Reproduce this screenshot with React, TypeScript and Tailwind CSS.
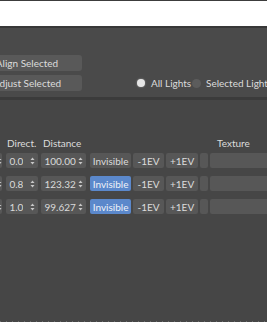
import React from 'react';

const rows = [
  { direct: '0.0', distance: '100.00', active: false },
  { direct: '0.8', distance: '123.32', active: true },
  { direct: '1.0', distance: '99.627', active: true },
];

function Arrows() {
  return (
    <svg width="5" height="8" viewBox="0 0 5 8" className="shrink-0">
      <path d="M2.5 0.5 L4.5 3 L0.5 3 Z" fill="#c8c8c8" />
      <path d="M2.5 7.5 L4.5 5 L0.5 5 Z" fill="#c8c8c8" />
    </svg>
  );
}

function Spinner({ value, width }: { value: string; width: string }) {
  return (
    <div className={`flex h-[15px] items-center justify-between overflow-hidden rounded-[2px] bg-[#575757] pl-[3px] pr-[3px] ${width}`}>
      <span className="overflow-hidden whitespace-nowrap text-[#dadada]">{value}</span>
      <Arrows />
    </div>
  );
}

export default function App() {
  return (
    <div
      className="flex h-[322px] w-[267px] flex-col overflow-hidden bg-[#464646] text-[10px] leading-[14px] text-[#dcdcdc]"
      style={{ fontFamily: 'Lato, "Noto Sans", sans-serif' }}
    >
      <div className="h-px shrink-0 bg-[#3c3c3c]" />
      <div className="h-[25px] shrink-0 bg-white" />
      <div className="h-[2px] shrink-0 bg-[#383838]" />

      <div className="flex h-[69px] shrink-0 items-end bg-[#4a4a4a] pb-[6px]">
        <div className="-ml-[28px] flex flex-col gap-[4px]">
          <button className="h-[16px] w-[110px] rounded-[3px] bg-[#595959] text-center text-[#dcdcdc]">Align Selected</button>
          <button className="h-[16px] w-[110px] rounded-[3px] bg-[#595959] text-center text-[#dcdcdc]">Adjust Selected</button>
        </div>
        <div className="ml-[55px] flex h-[16px] items-center whitespace-nowrap">
          <span className="h-[8px] w-[8px] rounded-full bg-[#e6e6e6] shadow-[0_0_2px_#9a9a9a]" />
          <span className="ml-[6px] w-[37px]">All Lights</span>
          <span className="ml-[4px] h-[9px] w-[9px] rounded-full bg-[#5c5c5c]" />
          <span className="ml-[5px]">Selected Lights</span>
        </div>
      </div>

      <div className="h-[3px] shrink-0 bg-[#3b3b3b]" />

      <div className="flex flex-1 flex-col pt-[36px]">
        <div className="flex h-[14px] items-center whitespace-nowrap">
          <span className="ml-[7px] w-[36px] shrink-0">Direct.</span>
          <span className="w-[174px] shrink-0">Distance</span>
          <span>Texture</span>
        </div>
        <div className="mt-[3px] flex flex-col gap-[8px]">
          {rows.map((r, i) => (
            <div key={i} className="flex h-[15px] items-center">
              <div className="-ml-[10px] flex h-[15px] w-[13px] items-center justify-end rounded-[2px] bg-[#575757]">
                <Arrows />
              </div>
              <div className="ml-[4px]">
                <Spinner value={r.direct} width="w-[32px]" />
              </div>
              <div className="ml-[3px]">
                <Spinner value={r.distance} width="w-[45px]" />
              </div>
              <button
                className={`ml-[4px] h-[15px] w-[42px] rounded-[2px] text-center ${r.active ? 'bg-[#5b88cb] text-[#eef2f8]' : 'bg-[#575757] text-[#dcdcdc]'}`}
              >
                Invisible
              </button>
              <button className="ml-[2px] h-[15px] w-[33px] rounded-[2px] bg-[#575757] text-center">-1EV</button>
              <button className="ml-[2px] h-[15px] w-[33px] rounded-[2px] bg-[#575757] text-center">+1EV</button>
              <div className="ml-[2px] h-[15px] w-[8px] rounded-[2px] bg-[#575757]" />
              <div className="ml-[2px] h-[15px] w-[60px] rounded-l-[2px] bg-[#575757]" />
            </div>
          ))}
        </div>
        <div className="flex-1" />
        <div className="h-px bg-[repeating-linear-gradient(90deg,#6e6e6e_0_1px,transparent_1px_6px)]" />
      </div>
    </div>
  );
}
